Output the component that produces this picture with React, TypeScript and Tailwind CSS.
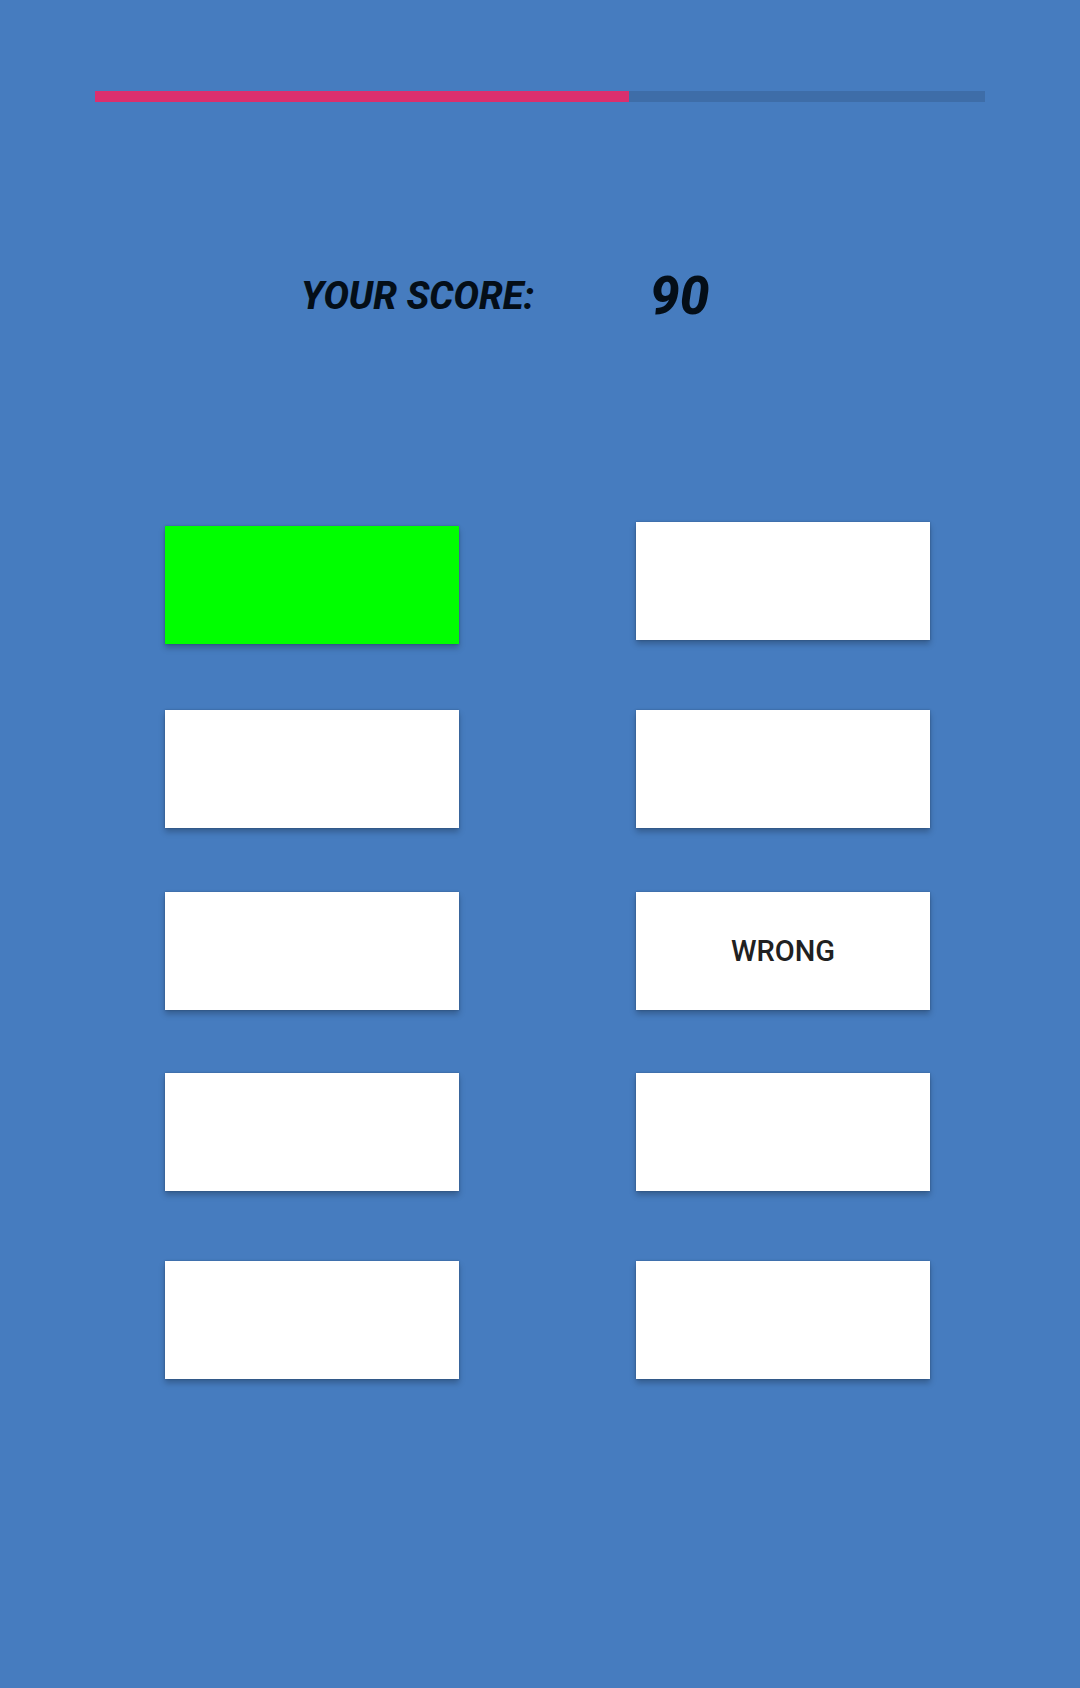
type Tile = { id: string; label?: string; active?: boolean };

const rows: { spacing: string; tiles: [Tile, Tile] }[] = [
  { spacing: "", tiles: [{ id: "Tile 1", active: true }, { id: "Tile 2" }] },
  { spacing: "mt-[66px]", tiles: [{ id: "Tile 3" }, { id: "Tile 4" }] },
  { spacing: "mt-16", tiles: [{ id: "Tile 5" }, { id: "Tile 6", label: "WRONG" }] },
  { spacing: "mt-[63px]", tiles: [{ id: "Tile 7" }, { id: "Tile 8" }] },
  { spacing: "mt-[70px]", tiles: [{ id: "Tile 9" }, { id: "Tile 10" }] },
];

function ProgressBar({ value }: { value: number }) {
  return (
    <div
      role="progressbar"
      aria-label="Time"
      aria-valuenow={value}
      aria-valuemin={0}
      aria-valuemax={100}
      className="mx-[95px] h-[11px] bg-[#3e6da8]"
    >
      <div className="h-full bg-[#db2f6e]" style={{ width: `${value}%` }} />
    </div>
  );
}

function TileButton({ tile }: { tile: Tile }) {
  return (
    <button
      type="button"
      aria-label={tile.label ?? tile.id}
      className={`h-[118px] w-full text-[29px] leading-8 font-medium text-[#212121] shadow-[0_4px_6px_rgba(0,0,0,0.25),0_0_2px_rgba(0,0,0,0.25)] ${
        tile.active ? "mt-1 bg-[#00ff00]" : "bg-white"
      }`}
    >
      {tile.label}
    </button>
  );
}

export default function App() {
  return (
    <main className="min-h-screen bg-[#467cbf] pt-[91px] pb-16 font-['Roboto',sans-serif]">
      <ProgressBar value={60} />
      <div className="mt-[162px] flex h-16 items-center pl-[301px] font-extrabold text-[#040e18] italic">
        <span className="w-[349px] text-[38px] leading-none">YOUR SCORE:</span>
        <span className="text-[53px] leading-none">90</span>
      </div>
      <section aria-label="Tiles" className="mt-[194px] pr-[150px] pl-[165px]">
        {rows.map((row) => (
          <div
            key={row.tiles[0].id}
            className={`grid grid-cols-2 items-start gap-x-[177px] ${row.spacing}`}
          >
            {row.tiles.map((tile) => (
              <TileButton key={tile.id} tile={tile} />
            ))}
          </div>
        ))}
      </section>
    </main>
  );
}
